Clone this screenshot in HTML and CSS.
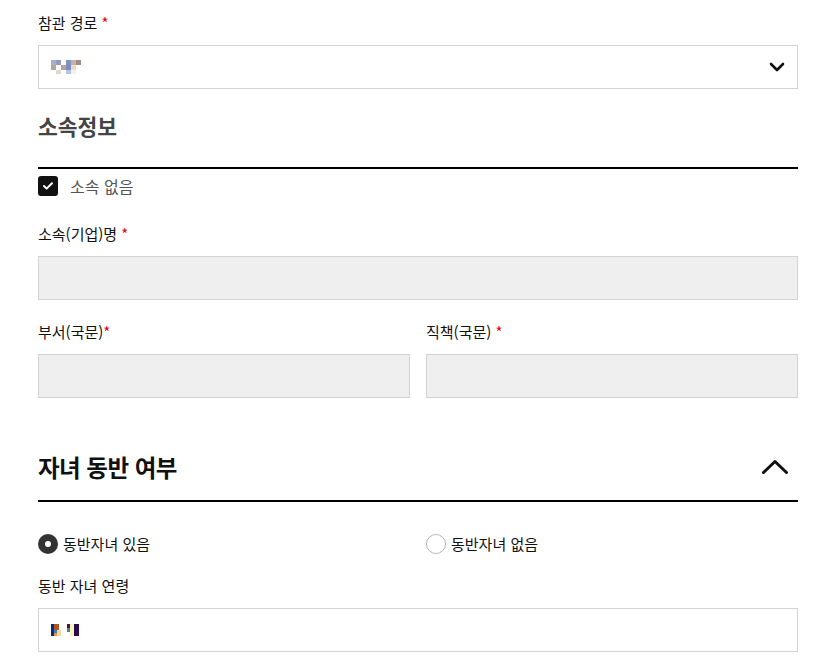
FILE: index.html
```html
<!DOCTYPE html>
<html lang="ko">
<head>
    <meta charset="UTF-8">
    <title>참관 신청</title>
    <link rel="stylesheet" href="styles.css">
</head>
<body>
    <div class="form">
        <div class="field">
            <label class="label">참관 경로 <em>*</em></label>
            <div class="select">
                <svg class="blur" width="30" height="15" viewBox="0 0 30 15">
                    <rect x="0" y="0" width="5" height="5" fill="#a6b0c6"/>
                    <rect x="5" y="0" width="5" height="5" fill="#8e9ec0"/>
                    <rect x="15" y="0" width="5" height="5" fill="#8094c2"/>
                    <rect x="20" y="0" width="5" height="5" fill="#c8b2a5"/>
                    <rect x="25" y="0" width="5" height="5" fill="#a08c84"/>
                    <rect x="0" y="5" width="5" height="5" fill="#b8a397"/>
                    <rect x="10" y="5" width="5" height="5" fill="#b9a397"/>
                    <rect x="15" y="5" width="5" height="5" fill="#7b8ec2"/>
                    <rect x="20" y="5" width="5" height="5" fill="#f1d8bf"/>
                    <rect x="5" y="10" width="5" height="4" fill="#e2d8d2"/>
                    <rect x="15" y="10" width="5" height="4" fill="#b0c4e6"/>
                    <rect x="20" y="10" width="5" height="4" fill="#eef3fa"/>
                </svg>
                <svg class="chev" width="16" height="10" viewBox="0 0 16 10">
                    <path d="M2 2l6 6 6-6" fill="none" stroke="#111" stroke-width="2.6" stroke-linecap="round" stroke-linejoin="round"/>
                </svg>
            </div>
        </div>

        <div class="sec-head">
            <h2 class="sec-title gray">소속정보</h2>
        </div>
        <div class="check">
            <span class="box">
                <svg width="12" height="10" viewBox="0 0 12 10">
                    <path d="M2 5l2.6 2.6L10 2.2" fill="none" stroke="#fff" stroke-width="2" stroke-linecap="round" stroke-linejoin="round"/>
                </svg>
            </span>
            <span>소속 없음</span>
        </div>

        <div class="field gap-lg">
            <label class="label">소속(기업)명 <em>*</em></label>
            <div class="input off"></div>
        </div>

        <div class="row">
            <div class="field">
                <label class="label">부서(국문)<em>*</em></label>
                <div class="input off"></div>
            </div>
            <div class="field">
                <label class="label">직책(국문) <em>*</em></label>
                <div class="input off"></div>
            </div>
        </div>

        <div class="sec-head big">
            <h2 class="sec-title">자녀 동반 여부</h2>
            <svg class="toggle" width="28" height="16" viewBox="0 0 28 16">
                <path d="M2.5 13.5L14 2.5l11.5 11" fill="none" stroke="#111" stroke-width="3" stroke-linecap="round" stroke-linejoin="round"/>
            </svg>
        </div>

        <div class="radios">
            <div class="radio">
                <span class="dot on"></span>
                <span>동반자녀 있음</span>
            </div>
            <div class="radio">
                <span class="dot"></span>
                <span>동반자녀 없음</span>
            </div>
        </div>

        <div class="field">
            <label class="label">동반 자녀 연령</label>
            <div class="input">
                <svg class="blur" width="28" height="12" viewBox="0 0 28 12">
                    <rect x="0" y="0" width="3" height="12" fill="#10287a"/>
                    <rect x="3" y="0" width="5" height="6" fill="#b0561e"/>
                    <rect x="3" y="6" width="3" height="3" fill="#2a80d8"/>
                    <rect x="3" y="9" width="3" height="3" fill="#e69a40"/>
                    <rect x="6" y="6" width="4" height="6" fill="#f6d49a"/>
                    <rect x="16" y="0" width="3" height="4" fill="#5a1030"/>
                    <rect x="16" y="4" width="3" height="4" fill="#4a8a88"/>
                    <rect x="19" y="0" width="4" height="12" fill="#f8f4c0"/>
                    <rect x="23" y="0" width="5" height="12" fill="#2a0a50"/>
                </svg>
            </div>
        </div>
    </div>
</body>
</html>
```

FILE: styles.css
```css
*{
    margin: 0;
    padding: 0;
    box-sizing: border-box;
}
body{
    font-family: "Noto Sans CJK KR", "Noto Sans", sans-serif;
    color: #111;
    background: #fff;
}
.form{
    width: 760px;
    margin-left: 38px;
    padding-top: 13px;
    display: flex;
    flex-direction: column;
}
.field{
    display: flex;
    flex-direction: column;
    gap: 12px;
}
.label{
    font-size: 15px;
    line-height: 20px;
    height: 20px;
}
.label em{
    font-style: normal;
    color: #e60012;
}
.select,.input{
    height: 44px;
    border: 1px solid #d3d3d3;
    display: flex;
    align-items: center;
    padding-left: 12px;
    padding-right: 12px;
}
.select{
    justify-content: space-between;
}
.blur{
    display: block;
}
.input.off{
    background: #efefef;
}
.sec-head{
    margin-top: 22px;
    padding-bottom: 26px;
    border-bottom: 2px solid #000;
    display: flex;
    align-items: center;
    justify-content: space-between;
}
.sec-title{
    font-size: 21.5px;
    line-height: 30px;
    font-weight: 700;
}
.gray{
    color: #444;
}
.check{
    margin-top: 7px;
    display: flex;
    align-items: center;
    gap: 12px;
    font-size: 16px;
    color: #555;
    line-height: 20px;
}
.box{
    width: 20px;
    height: 20px;
    border-radius: 3px;
    background: #111;
    display: flex;
    align-items: center;
    justify-content: center;
}
.gap-lg{
    margin-top: 28px;
}
.row{
    margin-top: 22px;
    display: grid;
    grid-template-columns: 1fr 1fr;
    column-gap: 16px;
}
.sec-head.big{
    margin-top: 54px;
    padding-bottom: 18px;
}
.sec-head.big .sec-title{
    font-size: 23.5px;
    letter-spacing: -0.5px;
}
.toggle{
    margin-right: 9px;
}
.radios{
    margin-top: 32px;
    display: grid;
    grid-template-columns: 1fr 1fr;
    column-gap: 16px;
}
.radio{
    display: flex;
    align-items: center;
    gap: 5px;
    font-size: 15px;
    line-height: 20px;
}
.dot{
    width: 20px;
    height: 20px;
    border-radius: 50%;
    border: 1px solid #bbb;
    background: #fff;
}
.dot.on{
    border: 7px solid #333;
    background: #fff;
}
.radios + .field{
    margin-top: 22px;
}
```
